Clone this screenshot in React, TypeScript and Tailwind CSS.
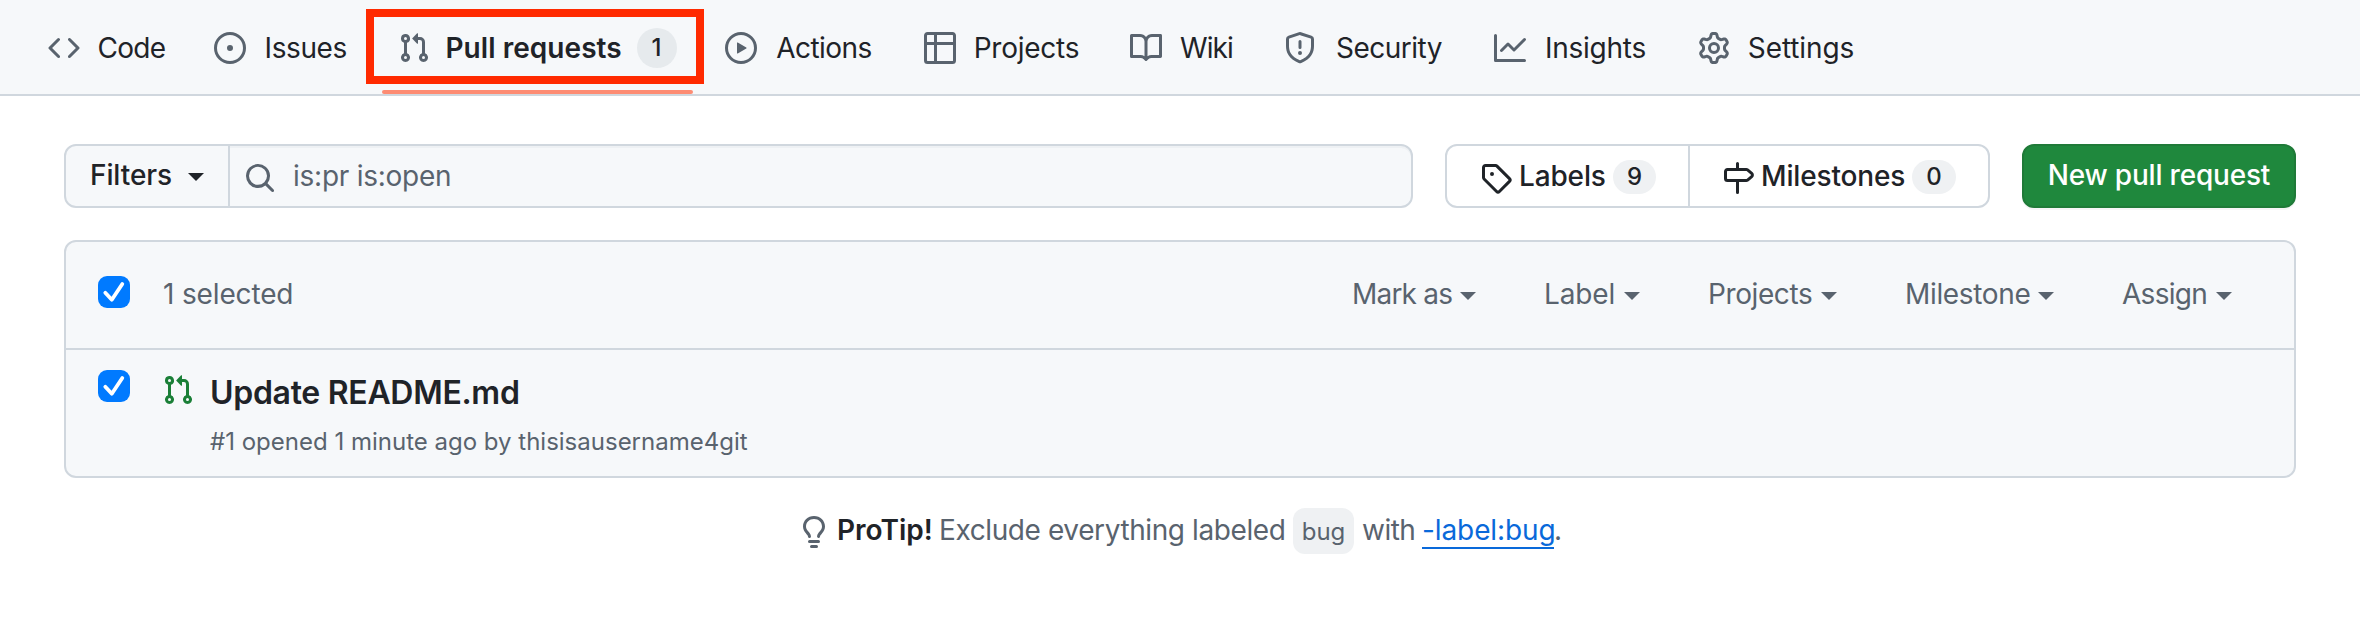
import type { ReactNode } from "react";

const paths = {
  code: "m11.28 3.22 4.25 4.25a.75.75 0 0 1 0 1.06l-4.25 4.25a.749.749 0 0 1-1.275-.326.749.749 0 0 1 .215-.734L13.94 8l-3.72-3.72a.749.749 0 0 1 .326-1.275.749.749 0 0 1 .734.215Zm-6.56 0a.751.751 0 0 1 1.042.018.751.751 0 0 1 .018 1.042L2.06 8l3.72 3.72a.749.749 0 0 1-.326 1.275.749.749 0 0 1-.734-.215L.47 8.53a.75.75 0 0 1 0-1.06Z",
  issue: "M8 9.5a1.5 1.5 0 1 0 0-3 1.5 1.5 0 0 0 0 3ZM8 0a8 8 0 1 1 0 16A8 8 0 0 1 8 0ZM1.5 8a6.5 6.5 0 1 0 13 0 6.5 6.5 0 0 0-13 0Z",
  pull: "M1.5 3.25a2.25 2.25 0 1 1 3 2.122v5.256a2.251 2.251 0 1 1-1.5 0V5.372A2.25 2.25 0 0 1 1.5 3.25Zm5.677-.177L9.573.677A.25.25 0 0 1 10 .854V2.5h1A2.5 2.5 0 0 1 13.5 5v5.628a2.251 2.251 0 1 1-1.5 0V5a1 1 0 0 0-1-1h-1v1.646a.25.25 0 0 1-.427.177L7.177 3.427a.25.25 0 0 1 0-.354ZM3.75 2.5a.75.75 0 1 0 0 1.5.75.75 0 0 0 0-1.5Zm0 9.5a.75.75 0 1 0 0 1.5.75.75 0 0 0 0-1.5Zm8.25.75a.75.75 0 1 0 1.5 0 .75.75 0 0 0-1.5 0Z",
  play: "M8 0a8 8 0 1 1 0 16A8 8 0 0 1 8 0ZM1.5 8a6.5 6.5 0 1 0 13 0 6.5 6.5 0 0 0-13 0Zm4.879-2.773 4.264 2.559a.25.25 0 0 1 0 .428l-4.264 2.559A.25.25 0 0 1 6 10.559V5.442a.25.25 0 0 1 .379-.215Z",
  table: "M0 1.75C0 .784.784 0 1.75 0h12.5C15.216 0 16 .784 16 1.75v12.5A1.75 1.75 0 0 1 14.25 16H1.75A1.75 1.75 0 0 1 0 14.25ZM6.5 6.5v8h7.75a.25.25 0 0 0 .25-.25V6.5Zm8-1.5V1.75a.25.25 0 0 0-.25-.25H6.5V5Zm-13 1.5v7.75c0 .138.112.25.25.25H5v-8ZM5 5V1.5H1.75a.25.25 0 0 0-.25.25V5Z",
  book: "M0 1.75A.75.75 0 0 1 .75 1h4.253c1.227 0 2.317.59 3 1.501A3.743 3.743 0 0 1 11.006 1h4.245a.75.75 0 0 1 .75.75v10.5a.75.75 0 0 1-.75.75h-4.507a2.25 2.25 0 0 0-1.591.659l-.622.621a.75.75 0 0 1-1.06 0l-.622-.621A2.25 2.25 0 0 0 5.258 13H.75a.75.75 0 0 1-.75-.75Zm7.251 10.324.004-5.073-.002-2.253A2.25 2.25 0 0 0 5.003 2.5H1.5v9h3.757a3.75 3.75 0 0 1 1.994.574ZM8.755 4.75l-.004 7.322a3.752 3.752 0 0 1 1.992-.572H14.5v-9h-3.495a2.25 2.25 0 0 0-2.25 2.25Z",
  shield: "M7.467.133a1.748 1.748 0 0 1 1.066 0l5.25 1.68A1.75 1.75 0 0 1 15 3.48V7c0 1.566-.32 3.182-1.303 4.682-.983 1.498-2.585 2.813-5.032 3.855a1.697 1.697 0 0 1-1.33 0c-2.447-1.042-4.049-2.357-5.032-3.855C1.32 10.182 1 8.566 1 7V3.48a1.75 1.75 0 0 1 1.217-1.667Zm.61 1.429a.25.25 0 0 0-.153 0l-5.25 1.68a.25.25 0 0 0-.174.238V7c0 1.358.275 2.666 1.057 3.86.784 1.194 2.121 2.34 4.366 3.297a.196.196 0 0 0 .154 0c2.245-.956 3.582-2.104 4.366-3.298C13.225 9.666 13.5 8.36 13.5 7V3.48a.251.251 0 0 0-.174-.237l-5.25-1.68ZM8.75 4.75v3a.75.75 0 0 1-1.5 0v-3a.75.75 0 0 1 1.5 0ZM9 10.5a1 1 0 1 1-2 0 1 1 0 0 1 2 0Z",
  graph: "M1.5 1.75V13.5h13.75a.75.75 0 0 1 0 1.5H.75a.75.75 0 0 1-.75-.75V1.75a.75.75 0 0 1 1.5 0Zm14.28 2.53-5.25 5.25a.75.75 0 0 1-1.06 0L7 7.06 4.28 9.78a.751.751 0 0 1-1.042-.018.751.751 0 0 1-.018-1.042l3.25-3.25a.75.75 0 0 1 1.06 0L10 7.94l4.72-4.72a.751.751 0 0 1 1.042.018.751.751 0 0 1 .018 1.042Z",
  gear: "M8 0a8.2 8.2 0 0 1 .701.031C9.444.095 9.99.645 10.16 1.29l.288 1.107c.018.066.079.158.212.224.231.114.454.243.668.386.123.082.233.09.299.071l1.103-.303c.644-.176 1.392.021 1.82.63.27.385.506.792.704 1.218.315.675.111 1.422-.364 1.891l-.814.806c-.049.048-.098.147-.088.294.016.257.016.515 0 .772-.01.147.038.246.088.294l.814.806c.475.469.679 1.216.364 1.891a7.977 7.977 0 0 1-.704 1.217c-.428.61-1.176.807-1.82.63l-1.102-.302c-.067-.019-.177-.011-.3.071a5.909 5.909 0 0 1-.668.386c-.133.066-.194.158-.211.224l-.29 1.106c-.168.646-.715 1.196-1.458 1.26a8.006 8.006 0 0 1-1.402 0c-.743-.064-1.289-.614-1.458-1.26l-.289-1.106c-.018-.066-.079-.158-.212-.224a5.738 5.738 0 0 1-.668-.386c-.123-.082-.233-.09-.299-.071l-1.103.303c-.644.176-1.392-.021-1.82-.63a8.12 8.12 0 0 1-.704-1.218c-.315-.675-.111-1.422.363-1.891l.815-.806c.05-.048.098-.147.088-.294a6.214 6.214 0 0 1 0-.772c.01-.147-.038-.246-.088-.294l-.815-.806C.635 6.045.431 5.298.746 4.623a7.92 7.92 0 0 1 .704-1.217c.428-.61 1.176-.807 1.82-.63l1.102.302c.067.019.177.011.3-.071.214-.143.437-.272.668-.386.133-.066.194-.158.211-.224l.29-1.106C6.009.645 6.556.095 7.299.03 7.53.01 7.764 0 8 0Zm-.571 1.525c-.036.003-.108.036-.137.146l-.289 1.105c-.147.561-.549.967-.998 1.189-.173.086-.34.183-.5.29-.417.278-.97.423-1.529.27l-1.103-.303c-.109-.03-.175.016-.195.045-.22.312-.412.644-.573.99-.014.031-.021.11.059.19l.815.806c.411.406.562.957.53 1.456a4.709 4.709 0 0 0 0 .582c.032.499-.119 1.05-.53 1.456l-.815.806c-.081.08-.073.159-.059.19.162.346.353.677.573.989.02.03.085.076.195.046l1.102-.303c.56-.153 1.113-.008 1.53.27.161.107.328.204.501.29.447.222.85.629.997 1.189l.289 1.105c.029.109.101.143.137.146a6.6 6.6 0 0 0 1.142 0c.036-.003.108-.036.137-.146l.289-1.105c.147-.561.549-.967.998-1.189.173-.086.34-.183.5-.29.417-.278.97-.423 1.529-.27l1.103.303c.109.029.175-.016.195-.045.22-.313.411-.644.573-.99.014-.031.021-.11-.059-.19l-.815-.806c-.411-.406-.562-.957-.53-1.456a4.709 4.709 0 0 0 0-.582c-.032-.499.119-1.05.53-1.456l.815-.806c.081-.08.073-.159.059-.19a6.464 6.464 0 0 0-.573-.989c-.02-.03-.085-.076-.195-.046l-1.102.303c-.56.153-1.113.008-1.53-.27a4.44 4.44 0 0 0-.501-.29c-.447-.222-.85-.629-.997-1.189l-.289-1.105c-.029-.11-.101-.143-.137-.146a6.6 6.6 0 0 0-1.142 0ZM11 8a3 3 0 1 1-6 0 3 3 0 0 1 6 0ZM9.5 8a1.5 1.5 0 1 0-3.001.001A1.5 1.5 0 0 0 9.5 8Z",
  search: "M10.68 11.74a6 6 0 0 1-7.922-8.982 6 6 0 0 1 8.982 7.922l3.04 3.04a.749.749 0 0 1-.326 1.275.749.749 0 0 1-.734-.215ZM11.5 7a4.499 4.499 0 1 0-8.997 0A4.499 4.499 0 0 0 11.5 7Z",
  tag: "M1 7.775V2.75C1 1.784 1.784 1 2.75 1h5.025c.464 0 .91.184 1.238.513l6.25 6.25a1.75 1.75 0 0 1 0 2.474l-5.026 5.026a1.75 1.75 0 0 1-2.474 0l-6.25-6.25A1.752 1.752 0 0 1 1 7.775Zm1.5 0c0 .066.026.13.073.177l6.25 6.25a.25.25 0 0 0 .354 0l5.025-5.025a.25.25 0 0 0 0-.354l-6.25-6.25a.25.25 0 0 0-.177-.073H2.75a.25.25 0 0 0-.25.25ZM6 5a1 1 0 1 1 0 2 1 1 0 0 1 0-2Z",
  milestone: "M7.75 0a.75.75 0 0 1 .75.75V3h3.634c.414 0 .814.147 1.13.414l2.07 1.75a1.75 1.75 0 0 1 0 2.672l-2.07 1.75a1.75 1.75 0 0 1-1.13.414H8.5v5.25a.75.75 0 0 1-1.5 0V10H2.75A1.75 1.75 0 0 1 1 8.25v-3.5C1 3.784 1.784 3 2.75 3H7V.75A.75.75 0 0 1 7.75 0Zm4.384 8.5a.25.25 0 0 0 .161-.06l2.07-1.75a.248.248 0 0 0 0-.38l-2.07-1.75a.25.25 0 0 0-.161-.06H2.75a.25.25 0 0 0-.25.25v3.5c0 .138.112.25.25.25h9.384Z",
  bulb: "M8 1.5c-2.363 0-4 1.69-4 3.75 0 .984.424 1.625.984 2.304l.214.253c.223.264.47.556.673.848.284.411.537.896.621 1.49a.75.75 0 0 1-1.484.211c-.04-.282-.163-.547-.37-.847a8.456 8.456 0 0 0-.542-.68c-.084-.1-.173-.205-.268-.32C3.201 7.75 2.5 6.766 2.5 5.25 2.5 2.31 4.863 0 8 0s5.5 2.31 5.5 5.25c0 1.516-.701 2.5-1.328 3.259-.095.115-.184.22-.268.319-.207.245-.383.453-.541.681-.208.3-.33.565-.37.847a.751.751 0 0 1-1.485-.212c.084-.593.337-1.078.621-1.489.203-.292.45-.584.673-.848.075-.088.147-.173.213-.253.561-.679.985-1.32.985-2.304 0-2.06-1.637-3.75-4-3.75ZM5.75 12h4.5a.75.75 0 0 1 0 1.5h-4.5a.75.75 0 0 1 0-1.5ZM6 15.25a.75.75 0 0 1 .75-.75h2.5a.75.75 0 0 1 0 1.5h-2.5a.75.75 0 0 1-.75-.75Z",
};

type IconName = keyof typeof paths;

function Icon({ name, className = "" }: { name: IconName; className?: string }) {
  return (
    <svg viewBox="0 0 16 16" fill="currentColor" aria-hidden="true" className={`size-8 shrink-0 ${className}`}>
      <path d={paths[name]} />
    </svg>
  );
}

function Caret({ className = "" }: { className?: string }) {
  return (
    <svg viewBox="0 0 16 8" fill="currentColor" aria-hidden="true" className={`h-2 w-4 shrink-0 ${className}`}>
      <path d="M0 0h16L8 8Z" />
    </svg>
  );
}

function Check() {
  return (
    <span role="checkbox" aria-checked="true" className="block size-8 shrink-0 rounded-[9px] bg-[#007aff]">
      <svg viewBox="0 0 32 32" fill="none" stroke="white" strokeWidth="3.8" strokeLinecap="round" strokeLinejoin="round" className="size-8">
        <path d="M7.3 16.8 13.8 23.7 24.3 8" />
      </svg>
    </span>
  );
}

const tabs: { icon: IconName; label: string; text: string; count?: number }[] = [
  { icon: "code", label: "Code", text: "w-[70px] pl-px tracking-[-0.7px]" },
  { icon: "issue", label: "Issues", text: "w-[87.5px] tracking-[-0.4px]" },
  { icon: "pull", label: "Pull requests", text: "w-[175px] tracking-[0.05px] font-semibold", count: 1 },
  { icon: "play", label: "Actions", text: "w-[103px] tracking-[-0.55px]" },
  { icon: "table", label: "Projects", text: "w-[110px] tracking-[-0.25px]" },
  { icon: "book", label: "Wiki", text: "w-[58px] tracking-[-0.9px]" },
  { icon: "shield", label: "Security", text: "w-[114px] pl-px tracking-[-0.5px]" },
  { icon: "graph", label: "Insights", text: "w-[108px] tracking-[-0.25px]" },
  { icon: "gear", label: "Settings", text: "w-[111px] tracking-[-0.1px]" },
];

const actions = [
  { label: "Mark as", box: "w-[124px]", text: "tracking-[-0.8px]" },
  { label: "Label", box: "w-[96px]", text: "tracking-[-0.15px]" },
  { label: "Projects", box: "w-[129px]", text: "tracking-[-0.4px]" },
  { label: "Milestone", box: "w-[149px]", text: "tracking-[-0.33px]" },
  { label: "Assign", box: "w-[110px]", text: "tracking-[-0.7px]" },
];

function Counter({ children, className }: { children: ReactNode; className: string }) {
  return (
    <span className={`flex shrink-0 items-center justify-center rounded-full text-2xl leading-none font-medium text-[#1f2328] ${className}`}>
      {children}
    </span>
  );
}

export default function App() {
  return (
    <div className="h-[631px] w-[2360px] overflow-hidden bg-white font-[Inter,sans-serif] text-[28px] leading-10 whitespace-nowrap text-[#1f2328]">
      <nav className="flex h-24 gap-4 border-b-2 border-[#d0d7de] bg-[#f6f8fa] pl-8">
        {tabs.map((tab) => (
          <div key={tab.label} className="relative flex h-24 items-center gap-4 px-4">
            <Icon name={tab.icon} className="text-[#59636e]" />
            <span className={`text-center ${tab.text}`}>{tab.label}</span>
            {tab.count !== undefined && (
              <>
                <Counter className="size-10 bg-[#e6eaed]">{tab.count}</Counter>
                <span className="absolute top-[9px] -left-[15.5px] h-[75px] w-[338px] border-8 border-[#ff2a00]" />
                <span className="absolute top-[90px] right-0 left-0 h-1 rounded-sm bg-[#fd8c73]" />
              </>
            )}
          </div>
        ))}
      </nav>

      <main className="px-16 pt-12">
        <div className="flex h-16">
          <div className="flex w-[1349px] rounded-xl border-2 border-[#d0d7de] bg-[#f6f8fa]">
            <button className="flex w-[164px] items-center border-r-2 border-[#d0d7de] pb-0.5 pl-6">
              <span className="font-medium tracking-[-0.1px]">Filters</span>
              <Caret className="mt-1 ml-4" />
            </button>
            <div className="flex flex-1 items-center rounded-r-[10px] pl-3.5 text-[#59636e] shadow-[inset_0_2px_0_rgba(208,215,222,0.2)]">
              <Icon name="search" className="mt-1" />
              <span className="ml-[17px] tracking-[-0.25px]">is:pr is:open</span>
            </div>
          </div>

          <div className="ml-8 flex w-[545px] rounded-xl border-2 border-[#d0d7de] font-medium">
            <div className="flex w-[243px] items-center border-r-2 border-[#d0d7de] pl-[33px]">
              <Icon name="tag" className="mt-1" />
              <span className="ml-[7px] w-[94px] tracking-[-0.14px]">Labels</span>
              <Counter className="mt-0.5 h-[34px] w-[43px] bg-[#eff1f3]">9</Counter>
            </div>
            <div className="flex items-center pl-8">
              <Icon name="milestone" className="mt-1" />
              <span className="ml-[7px] w-[151px] tracking-[-0.15px]">Milestones</span>
              <Counter className="mt-0.5 h-[34px] w-11 bg-[#eff1f3]">0</Counter>
            </div>
          </div>

          <button className="ml-8 flex w-[274px] items-center justify-center rounded-xl border-2 border-[#1f7a38] bg-[#1f883d] pb-0.5 font-medium tracking-[-0.2px] text-white shadow-[0_2px_0_rgba(31,35,40,0.04)]">
            New pull request
          </button>
        </div>

        <section className="mt-8 h-[238px] rounded-xl border-2 border-[#d0d7de] bg-[#f6f8fa]">
          <header className="flex h-[108px] items-start border-b-2 border-[#d0d7de] pt-8 pr-[62px] pl-8 text-[#59636e]">
            <div className="mt-0.5">
              <Check />
            </div>
            <span className="ml-[33px] tracking-[-0.15px]">1 selected</span>
            <div className="ml-auto flex gap-[68px]">
              {actions.map((action) => (
                <div key={action.label} className={`flex items-center justify-between ${action.box}`}>
                  <span className={action.text}>{action.label}</span>
                  <Caret className="mt-1" />
                </div>
              ))}
            </div>
          </header>
          <div className="flex items-start pl-8">
            <div className="mt-5">
              <Check />
            </div>
            <Icon name="pull" className="mt-6 ml-8 text-[#1a7f37]" />
            <div className="mt-[19px] ml-4">
              <h3 className="text-[32px] leading-[48px] font-semibold tracking-[-0.3px]">Update README.md</h3>
              <p className="mt-[7px] text-2xl leading-9 text-[#59636e]">#1 opened 1 minute ago by thisisausername4git</p>
            </div>
          </div>
        </section>

        <p className="mt-[30px] flex items-center pl-[734px] text-[#59636e]">
          <Icon name="bulb" className="mt-0.5" />
          <strong className="-mt-0.5 ml-[7px] w-[102px] font-semibold text-[#1f2328]">ProTip!</strong>
          <span className="-mt-0.5 w-[354px] tracking-[-0.4px]">Exclude everything labeled</span>
          <code className="flex h-[46px] w-[61px] items-center justify-center rounded-xl bg-[#eff1f3] pt-0.5 font-[Inter,sans-serif] text-2xl">bug</code>
          <span className="-mt-0.5 ml-2 w-[60px] tracking-[-0.5px]">with</span>
          <a className="-mt-0.5 h-[38px] w-[132px] border-b-2 border-[#0969da] tracking-[-0.1px] text-[#0969da]">
            <span className="-mt-px block">-label:bug</span>
          </a>
          <span className="-mt-0.5">.</span>
        </p>
      </main>
    </div>
  );
}
